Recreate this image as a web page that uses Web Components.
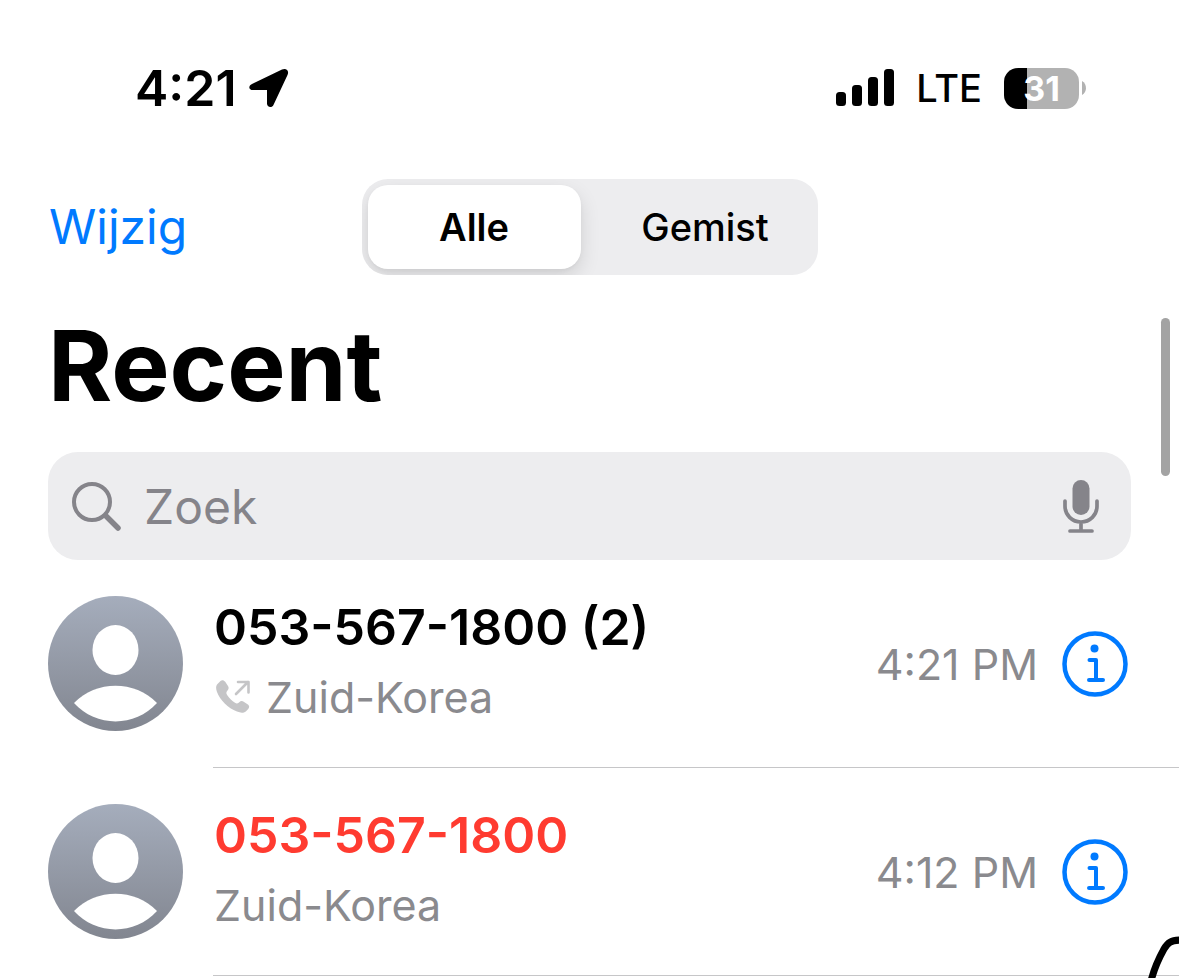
<!DOCTYPE html>
<html lang="nl">
<head>
<meta charset="utf-8">
<meta name="viewport" content="width=device-width, initial-scale=1">
<title>Recent</title>
<style>
  body {
    margin: 0;
    background: #fff;
    color: #000;
    font-family: Inter, "Liberation Sans", sans-serif;
  }
</style>
</head>
<body>
<phone-screen>
  <status-bar slot="status" time="4:21" network="LTE" battery="31"></status-bar>
  <nav-bar slot="nav">
    <button slot="action" type="button">Wijzig</button>
    <segmented-control options="Alle,Gemist" selected="Alle"></segmented-control>
  </nav-bar>
  <large-title slot="title">Recent</large-title>
  <search-field slot="search" placeholder="Zoek"></search-field>
  <call-row time="4:21 PM" outgoing>
    <span slot="caller">053-567-1800 (2)</span>
    <span slot="place">Zuid-Korea</span>
  </call-row>
  <call-row time="4:12 PM" missed>
    <span slot="caller">053-567-1800</span>
    <span slot="place">Zuid-Korea</span>
  </call-row>
</phone-screen>

<script>
class PhoneScreen extends HTMLElement {
  constructor() {
    super();
    this.attachShadow({ mode: 'open' });
    this.shadowRoot.innerHTML = `
      <style>
        :host {
          display: block;
          position: relative;
          min-height: 100vh;
          overflow: hidden;
        }
        /* both lie over the list */
        .scroll {
          position: absolute;
          top: 318px;
          right: 9px;
          width: 9px;
          height: 158px;
          border-radius: 5px;
          background: #a3a3a3;
        }
        .stroke {
          position: absolute;
          right: 0;
          bottom: 0;
          display: block;
        }
      </style>
      <slot name="status"></slot>
      <slot name="nav"></slot>
      <main>
        <slot name="title"></slot>
        <slot name="search"></slot>
        <slot></slot>
      </main>
      <div class="scroll"></div>
      <svg class="stroke" width="32" height="44" viewBox="0 0 32 44" fill="none" stroke="#000" stroke-width="7" aria-hidden="true">
        <path d="M4 47C7 35 12 24 17 15C21 8 24 6.500 34 6"/>
      </svg>
    `;
  }
}

class StatusBar extends HTMLElement {
  constructor() {
    super();
    this.attachShadow({ mode: 'open' });
  }
  connectedCallback() {
    const battery = this.getAttribute('battery');
    this.shadowRoot.innerHTML = `
      <style>
        :host {
          display: flex;
          justify-content: space-between;
          align-items: center;
          height: 176px;
          padding: 0 93px 0 135px;
          box-sizing: border-box;
        }
        .left, .right { display: flex; align-items: center; }
        .left { gap: 12px; }
        .right { gap: 22px; }
        .time { font-size: 50px; font-weight: 600; line-height: 60px; }
        .network { font-size: 38px; font-weight: 500; line-height: 60px; }
        .battery { display: flex; align-items: center; gap: 3px; }
        .cell {
          width: 75px;
          height: 41px;
          border-radius: 14px;
          background: linear-gradient(to right, #000 ${battery}%, #b2b2b2 ${battery}%);
          color: #fff;
          font-size: 34px;
          font-weight: 700;
          line-height: 41px;
          text-align: center;
        }
        svg { display: block; }
      </style>
      <div class="left">
        <span class="time">${this.getAttribute('time')}</span>
        <svg width="40" height="40" viewBox="0 0 40 40" aria-hidden="true">
          <path d="M3 16L33 1.600C37 -.2 40.500 2.500 38.500 7L24.700 36.500C23 40.500 18 39.500 18 35.500V22H4C-.4 22 -1 18 3 16Z"/>
        </svg>
      </div>
      <div class="right">
        <svg width="58" height="38" viewBox="0 0 58 38" aria-hidden="true">
          <rect x="0" y="23" width="10" height="14" rx="3.500"/>
          <rect x="16" y="16" width="10" height="21" rx="3.500"/>
          <rect x="32" y="8" width="10" height="29" rx="3.500"/>
          <rect x="48" y="0" width="10" height="37" rx="3.500"/>
        </svg>
        <span class="network">${this.getAttribute('network')}</span>
        <div class="battery">
          <div class="cell">${battery}</div>
          <svg width="4" height="14" viewBox="0 0 4 14" fill="#b2b2b2" aria-hidden="true">
            <path d="M0 0C5.300 3 5.300 11 0 14Z"/>
          </svg>
        </div>
      </div>
    `;
  }
}

class NavBar extends HTMLElement {
  constructor() {
    super();
    this.attachShadow({ mode: 'open' });
    this.shadowRoot.innerHTML = `
      <style>
        :host {
          display: grid;
          grid-template-columns: 1fr 456px 1fr;
          align-items: center;
          padding: 3px 49px 0;
        }
        ::slotted(button) {
          justify-self: start;
          padding: 0;
          border: 0;
          background: none;
          color: #007aff;
          font: 400 48px/60px Inter, "Liberation Sans", sans-serif;
          cursor: pointer;
        }
      </style>
      <slot name="action"></slot>
      <slot></slot>
    `;
  }
}

class SegmentedControl extends HTMLElement {
  constructor() {
    super();
    this.attachShadow({ mode: 'open' });
  }
  connectedCallback() {
    const selected = this.getAttribute('selected');
    const buttons = this.getAttribute('options').split(',').map(option =>
      `<button type="button" aria-pressed="${option == selected}">${option}</button>`
    ).join('');
    this.shadowRoot.innerHTML = `
      <style>
        :host {
          display: grid;
          grid-template-columns: 1fr 1fr;
          gap: 18px;
          padding: 6px;
          border-radius: 26px;
          background: #ededef;
          overflow: hidden;
        }
        button {
          height: 84px;
          padding: 0;
          border: 0;
          border-radius: 20px;
          background: none;
          color: inherit;
          font: 500 38px/46px Inter, "Liberation Sans", sans-serif;
          cursor: pointer;
        }
        button[aria-pressed="true"] {
          background: #fff;
          font-weight: 600;
          box-shadow: 0 8px 20px rgba(0,0,0,0.12), 0 2px 4px rgba(0,0,0,0.04);
        }
      </style>
      ${buttons}
    `;
    this.shadowRoot.querySelectorAll('button').forEach(button => {
      button.addEventListener('click', this._select.bind(this));
    });
  }
  _select(event) {
    this.shadowRoot.querySelectorAll('button').forEach(button => {
      button.setAttribute('aria-pressed', button == event.currentTarget);
    });
  }
}

class LargeTitle extends HTMLElement {
  constructor() {
    super();
    this.attachShadow({ mode: 'open' });
    this.shadowRoot.innerHTML = `
      <style>
        :host { display: block; padding: 31px 48px 26px; }
        h1 { margin: 0; font-size: 98px; font-weight: 700; line-height: 120px; }
      </style>
      <h1><slot></slot></h1>
    `;
  }
}

class SearchField extends HTMLElement {
  constructor() {
    super();
    this.attachShadow({ mode: 'open' });
  }
  connectedCallback() {
    const placeholder = this.getAttribute('placeholder');
    this.shadowRoot.innerHTML = `
      <style>
        :host {
          display: flex;
          align-items: center;
          gap: 22px;
          height: 108px;
          margin: 0 48px;
          padding: 1px 32px 0 24px;
          box-sizing: border-box;
          border-radius: 30px;
          background: #ededef;
          color: #85848a;
        }
        input {
          flex: 1;
          min-width: 0;
          height: 60px;
          padding: 0;
          border: 0;
          outline: 0;
          background: none;
          color: #000;
          font: 400 48px/60px Inter, "Liberation Sans", sans-serif;
        }
        input::placeholder { color: #85848a; opacity: 1; }
        button { padding: 0; border: 0; background: none; color: inherit; cursor: pointer; }
        svg { display: block; }
      </style>
      <svg width="50" height="50" viewBox="0 0 50 50" fill="none" stroke="currentColor" stroke-linecap="round" aria-hidden="true">
        <circle cx="20" cy="20" r="18" stroke-width="4"/>
        <path d="M34 34L46 46" stroke-width="5.500"/>
      </svg>
      <input type="text" placeholder="${placeholder}" aria-label="${placeholder}">
      <button type="button" aria-label="Dicteer">
        <svg width="36" height="54" viewBox="0 0 36 54" fill="none" stroke="currentColor" stroke-width="3.700" stroke-linecap="round">
          <rect x="9.500" y="0" width="17" height="35" rx="8.500" fill="currentColor" stroke="none"/>
          <path d="M2 21V26C2 35 9 42 18 42C27 42 34 35 34 26V21M18 42V51M7 51H29"/>
        </svg>
      </button>
    `;
  }
}

class CallRow extends HTMLElement {
  constructor() {
    super();
    this.attachShadow({ mode: 'open' });
  }
  connectedCallback() {
    const outgoing = this.hasAttribute('outgoing') ? `
      <svg width="36" height="34" viewBox="-2 0 36 34" role="img" aria-label="Uitgaand">
        <path fill="#c5c5c7" d="M1.500 4L4.500 1C6 -.3 8 .2 9.200 1.800L12 6C13 7.600 12.800 9 11.500 10.500C10 12.300 10 13.300 11.300 15.200C13.500 18.400 16 20.800 19 22.800C20.600 23.800 21.500 23.700 23 22.400C24.700 20.900 26 20.700 27.700 21.700L31.500 24.200C33.500 25.600 33.700 27.300 32.200 29L29.800 31.400C27.500 33.300 24.500 33 21 31.600C12 28 4 20 1 12C-.3 8.500 -.2 6 1.500 4Z"/>
        <path fill="none" stroke="#c5c5c7" stroke-width="2.600" stroke-linecap="round" stroke-linejoin="round" d="M20 14L32 2M22 2H32.500V12.500"/>
      </svg>` : '';
    this.shadowRoot.innerHTML = `
      <style>
        :host { display: flex; height: 208px; padding-left: 48px; box-sizing: border-box; }
        .avatar { flex: none; margin: 36px 30px 0 0; }
        .body {
          flex: 1;
          display: flex;
          box-sizing: border-box;
          padding: 36px 51px 0 1px;
          border-bottom: 1px solid #c6c6c8;
        }
        .who { flex: 1; display: flex; flex-direction: column; gap: 10px; }
        .caller { font-size: 50px; font-weight: 600; line-height: 62px; }
        :host([missed]) .caller { color: #ff3b30; }
        .place {
          display: flex;
          align-items: center;
          gap: 16px;
          color: #8a8a8e;
          font-size: 43px;
          line-height: 58px;
        }
        .when { display: flex; align-items: center; gap: 24px; height: 135px; color: #8a8a8e; }
        time { font-size: 43px; line-height: 58px; }
        button { padding: 0; border: 0; background: none; color: #007aff; cursor: pointer; }
        svg { display: block; }
      </style>
      <svg class="avatar" width="135" height="135" viewBox="0 0 135 135" aria-hidden="true">
        <defs>
          <linearGradient id="shade" x1="0" y1="0" x2="0" y2="1">
            <stop offset="0" stop-color="#a5adbc"/>
            <stop offset="1" stop-color="#828690"/>
          </linearGradient>
        </defs>
        <circle cx="67.500" cy="67.500" r="67.500" fill="url(#shade)"/>
        <ellipse cx="67.500" cy="54" rx="23" ry="25" fill="#fff"/>
        <path d="M26 107C48 84 87 84 109 107C87 131.500 48 131.500 26 107Z" fill="#fff"/>
      </svg>
      <div class="body">
        <div class="who">
          <div class="caller"><slot name="caller"></slot></div>
          <div class="place">${outgoing}<slot name="place"></slot></div>
        </div>
        <div class="when">
          <time>${this.getAttribute('time')}</time>
          <button type="button" aria-label="Info">
            <svg width="66" height="66" viewBox="0 0 66 66" fill="none" stroke="currentColor" stroke-linecap="round" stroke-linejoin="round">
              <circle cx="33" cy="33" r="30.500" stroke-width="4.500"/>
              <circle cx="32.500" cy="17.500" r="4" fill="currentColor" stroke="none"/>
              <path d="M27.500 29H34V49M27 49H41" stroke-width="4"/>
            </svg>
          </button>
        </div>
      </div>
    `;
  }
}

customElements.define('phone-screen', PhoneScreen);
customElements.define('status-bar', StatusBar);
customElements.define('nav-bar', NavBar);
customElements.define('segmented-control', SegmentedControl);
customElements.define('large-title', LargeTitle);
customElements.define('search-field', SearchField);
customElements.define('call-row', CallRow);
</script>
</body>
</html>
